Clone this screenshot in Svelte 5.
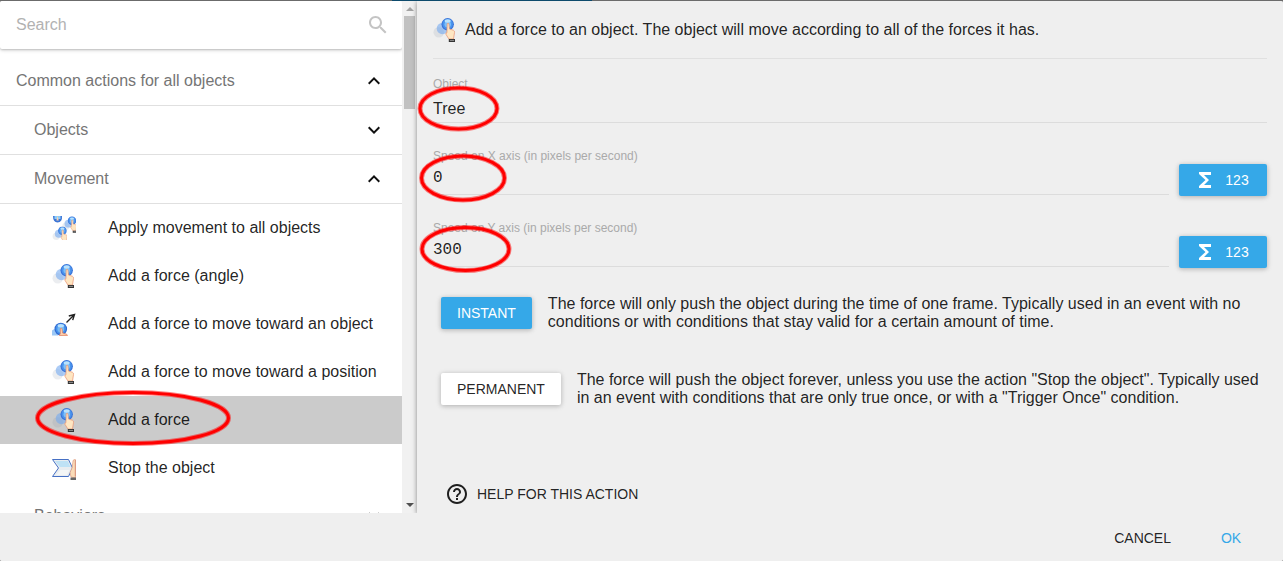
<script lang="ts">
	type IconName = 'force' | 'forces' | 'toward' | 'stop';

	interface Action {
		label: string;
		icon: IconName;
	}

	const actions: Action[] = [
		{ label: 'Apply movement to all objects', icon: 'forces' },
		{ label: 'Add a force (angle)', icon: 'force' },
		{ label: 'Add a force to move toward an object', icon: 'toward' },
		{ label: 'Add a force to move toward a position', icon: 'force' },
		{ label: 'Add a force', icon: 'force' },
		{ label: 'Stop the object', icon: 'stop' }
	];

	let selected = $state('Add a force');
	let search = $state('');
	let objectName = $state('Tree');
	let speeds = $state([
		{ id: 'speed-1', label: 'Speed on X axis (in pixels per second)', value: '0' },
		{ id: 'speed-2', label: 'Speed on Y axis (in pixels per second)', value: '300' }
	]);
	let mode = $state('instant');
</script>

{#snippet pointer()}
	<circle cx="5.8" cy="14.3" r="5.3" fill="#8a94a5" fill-opacity="0.17" />
	<circle cx="9.5" cy="10.5" r="5.8" fill="#74aaf0" fill-opacity="0.6" />
	<circle cx="14.7" cy="6.3" r="6.2" fill="#3a74d8" />
	<circle cx="14.7" cy="6" r="5.2" fill="#4a94ee" />
	<circle cx="14.7" cy="6.2" r="3.2" fill="#7cc0fa" />
	<ellipse cx="14.7" cy="3" rx="3" ry="1.7" fill="#b9e2fd" />
	<path
		d="M14.2 5.6q.9-.8 1.7 0l.6 5.4 4 1.3q1.3.6 1 2.3l-1 6.4h-4.6l-2.9-4.6q-.6-2 .9-1.6z"
		fill="#fee6c2"
		stroke="#e89070"
		stroke-width="0.7"
	/>
	<path d="M15.8 21H22v3h-6.2z" fill="#333" />
	<path d="M16.8 22.4h4.3" stroke="#aaa" stroke-width="0.8" />
{/snippet}

{#snippet actionIcon(name: IconName)}
	<svg class="action-icon" viewBox="0 0 24 24" aria-hidden="true">
		{#if name === 'force'}
			{@render pointer()}
		{:else if name === 'forces'}
			<path d="M1 0h9q.5 6-4.5 6.5Q1 6 1 0z" fill="#3c75d6" />
			<path d="M2.5 0h6v3h-6z" fill="#8ccbfa" />
			<path d="M5.5 0l1.3 4.5H4.4z" fill="#fbd3b0" />
			<g transform="translate(10 .5) scale(.68)">{@render pointer()}</g>
			<svg x="0" y="10.5" width="15" height="13.5" viewBox="0 0 21 19.6">{@render pointer()}</svg>
		{:else if name === 'toward'}
			<path d="M0 23.5v-5q3-3 7-1l-1 6z" fill="#9cc8f5" />
			<circle cx="8.8" cy="17" r="6.3" fill="#2f6ad2" />
			<circle cx="8.8" cy="16.7" r="5.2" fill="#4791ea" />
			<circle cx="8.8" cy="17" r="3.4" fill="#74bbf8" />
			<ellipse cx="8.8" cy="13.8" rx="3.2" ry="1.7" fill="#b9e2fd" />
			<path
				d="M8.3 16.6q.9-.8 1.7 0l.6 4.4 4.2 1.3.7 1.2H7.2l1.2-2z"
				fill="#fdd0ac"
				stroke="#e2805f"
				stroke-width="0.7"
			/>
			<path d="M14.5 10.5L22 3M16.8 4l5.7-1.5-1.8 5.6" fill="none" stroke="#222" stroke-width="1.4" />
		{:else}
			<path d="M.5 3.5h16l4 8.5-4 8.5H.5l6-8.5z" fill="#e9edf0" stroke="#4670c4" />
			<path d="M3 5h12.7l2.8 6H7.8z" fill="#bfe2f5" />
			<path d="M8.5 14h9l-2.5 5H4z" fill="#f4f6f6" />
			<path
				d="M22.5 3.5q-1.7 0-1.7 3l-.6 5-2.2 5 1 4.5 2 .5h3V4z"
				fill="#fadcb8"
				stroke="#dd9a80"
				stroke-width="0.7"
			/>
			<path d="M23.3 4v16.5" stroke="#d68d78" stroke-width="0.9" />
			<path d="M18.5 21.5H24V24h-5.5z" fill="#666" />
		{/if}
	</svg>
{/snippet}

{#snippet group(label: string, open: boolean, nested: boolean)}
	<button class="group" class:nested aria-expanded={open}>
		<span>{label}</span>
		<svg class="icon" viewBox="0 0 24 24" aria-hidden="true">
			{#if open}
				<path d="M12 8l-6 6 1.4 1.4L12 10.8l4.6 4.6L18 14z" />
			{:else}
				<path d="M16.6 8.6L12 13.2 7.4 8.6 6 10l6 6 6-6z" />
			{/if}
		</svg>
	</button>
{/snippet}

<div class="backdrop">
	<div class="backdrop-tabs"></div>
	<div class="dialog" role="dialog" aria-label="Edit action">
		<div class="body">
			<aside class="sidebar">
				<div class="selector">
					<div class="search">
						<input type="text" placeholder="Search" aria-label="Search" bind:value={search} />
						<svg class="icon" viewBox="0 0 24 24" aria-hidden="true">
							<path
								d="M15.5 14h-.79l-.28-.27C15.41 12.59 16 11.11 16 9.5 16 5.91 13.09 3 9.5 3S3 5.91 3 9.5 5.91 16 9.5 16c1.61 0 3.09-.59 4.23-1.57l.27.28v.79l5 4.99L20.49 19l-4.99-5zm-6 0C7.01 14 5 11.99 5 9.5S7.01 5 9.5 5 14 7.01 14 9.5 11.99 14 9.5 14z"
							/>
						</svg>
					</div>
					<div class="list">
						{@render group('Common actions for all objects', true, false)}
						{@render group('Objects', false, true)}
						{@render group('Movement', true, true)}
						{#each actions as action}
							<button
								class="action"
								class:selected={selected === action.label}
								onclick={() => (selected = action.label)}
							>
								{@render actionIcon(action.icon)}
								<span>{action.label}</span>
							</button>
						{/each}
						{@render group('Behaviors', false, true)}
					</div>
				</div>
				<div class="scrollbar" aria-hidden="true">
					<span class="arrow up"></span>
					<span class="thumb"></span>
					<span class="arrow down"></span>
				</div>
			</aside>

			<main class="editor">
				<header>
					{@render actionIcon('force')}
					<p>Add a force to an object. The object will move according to all of the forces it has.</p>
				</header>

				<div class="field">
					<div class="text-field">
						<label for="object">Object</label>
						<input id="object" type="text" bind:value={objectName} />
					</div>
				</div>

				{#each speeds as speed}
					<div class="field">
						<div class="text-field">
							<label for={speed.id}>{speed.label}</label>
							<input id={speed.id} class="expression" type="text" bind:value={speed.value} />
						</div>
						<button class="raised primary with-icon">
							<svg class="icon" viewBox="0 0 24 24" aria-hidden="true">
								<path d="M18 4H6v2l6.5 6L6 18v2h12v-3h-7l5-5-5-5h7z" />
							</svg>
							123
						</button>
					</div>
				{/each}

				<div class="mode">
					<button
						class="raised"
						class:primary={mode === 'instant'}
						onclick={() => (mode = 'instant')}>INSTANT</button
					>
					<p>
						The force will only push the object during the time of one frame. Typically used in an
						event with no conditions or with conditions that stay valid for a certain amount of time.
					</p>
				</div>
				<div class="mode">
					<button
						class="raised"
						class:primary={mode === 'permanent'}
						onclick={() => (mode = 'permanent')}>PERMANENT</button
					>
					<p>
						The force will push the object forever, unless you use the action "Stop the object".
						Typically used in an event with conditions that are only true once, or with a "Trigger
						Once" condition.
					</p>
				</div>

				<button class="flat help">
					<svg class="icon" viewBox="0 0 24 24" aria-hidden="true">
						<path
							d="M11 18h2v-2h-2v2zm1-16C6.48 2 2 6.48 2 12s4.48 10 10 10 10-4.48 10-10S17.52 2 12 2zm0 18c-4.41 0-8-3.59-8-8s3.59-8 8-8 8 3.59 8 8-3.59 8-8 8zm0-14c-2.21 0-4 1.79-4 4h2c0-1.1.9-2 2-2s2 .9 2 2c0 2-3 1.75-3 5h2c0-2.25 3-2.5 3-5 0-2.21-1.79-4-4-4z"
						/>
					</svg>
					HELP FOR THIS ACTION
				</button>
			</main>
		</div>

		<footer>
			<button class="flat">CANCEL</button>
			<button class="flat ok">OK</button>
		</footer>
	</div>

	<!-- Hand-drawn circles around the values to fill in -->
	<svg class="marks" aria-hidden="true">
		{#each [[458.5, 108.5, 38.5, 20.5], [463, 178, 41.5, 22], [465.5, 249, 43.5, 21.5], [133, 418, 95.5, 25.5]] as [cx, cy, rx, ry]}
			<ellipse class="halo" {cx} {cy} {rx} {ry} />
			<ellipse {cx} {cy} {rx} {ry} />
		{/each}
	</svg>
</div>

<style>
	:global(body) {
		margin: 0;
		font-family: 'Liberation Sans', Arial, sans-serif;
		font-size: 16px;
		color: rgba(0, 0, 0, 0.87);
	}

	.backdrop {
		position: relative;
		display: flex;
		flex-direction: column;
		height: 100vh;
		overflow: hidden;
		background: #6b6b6b;
	}

	.backdrop-tabs {
		flex: none;
		width: 200px;
		height: 1px;
		margin-left: 392px;
		background: #0d4a6c;
	}

	.dialog {
		display: flex;
		flex: 1;
		flex-direction: column;
		min-height: 0;
		overflow: hidden;
		border-radius: 2px;
		background: #efefef;
	}

	.body {
		display: flex;
		flex: 1;
		min-height: 0;
		overflow: hidden;
	}

	button {
		box-sizing: border-box;
		margin: 0;
		border: 0;
		color: inherit;
		font-family: inherit;
		text-align: left;
		cursor: pointer;
	}

	input {
		box-sizing: border-box;
		padding: 0;
		border: 0;
		outline: none;
		background: none;
		color: inherit;
		font: inherit;
	}

	p {
		margin: 0;
	}

	.icon,
	.action-icon {
		flex: none;
		width: 24px;
		height: 24px;
		fill: currentColor;
	}

	/* Left: list of actions */
	.sidebar {
		display: flex;
		flex: 0 0 417px;
		background: #fff;
	}

	.selector {
		display: flex;
		flex: 1;
		flex-direction: column;
		min-width: 0;
	}

	.search {
		display: flex;
		flex: none;
		align-items: center;
		height: 48px;
		padding: 0 12px 0 16px;
		border-radius: 2px;
		box-shadow:
			0 1px 4px rgba(0, 0, 0, 0.16),
			0 1px 2px rgba(0, 0, 0, 0.16);
	}

	.search input {
		flex: 1;
		height: 48px;
	}

	.search input::placeholder {
		color: #b2b2b2;
		opacity: 1;
	}

	.search .icon {
		color: #c4c4c4;
	}

	.list {
		flex: 1;
		min-height: 0;
		padding-top: 8px;
		overflow: hidden;
	}

	.group {
		display: flex;
		align-items: center;
		justify-content: space-between;
		width: 100%;
		height: 49px;
		padding: 0 16px;
		border-bottom: 1px solid #e0e0e0;
		background: #fff;
		color: #757575;
		font-size: 16px;
	}

	.group.nested {
		padding-left: 34px;
	}

	.group .icon {
		color: #111;
	}

	.action {
		display: flex;
		align-items: center;
		gap: 32px;
		width: 100%;
		height: 48px;
		padding: 0 16px 0 52px;
		background: #fff;
		font-size: 16px;
	}

	.action.selected {
		background: #cbcbcb;
	}

	.scrollbar {
		display: flex;
		flex: 0 0 15px;
		flex-direction: column;
		align-items: center;
		background: #f1f1f1;
	}

	.thumb {
		width: 11px;
		height: 93px;
		margin-top: 5px;
		background: #c1c1c1;
	}

	.arrow {
		border: 4px solid transparent;
	}

	.arrow.up {
		margin-top: 2px;
		border-bottom-color: #a3a3a3;
	}

	.arrow.down {
		margin-top: auto;
		margin-bottom: 2px;
		border-top-color: #505050;
	}

	/* Right: parameters of the selected action */
	.editor {
		z-index: 1;
		display: flex;
		flex: 1;
		flex-direction: column;
		min-width: 0;
		padding: 0 16px;
		background: #efefef;
		box-shadow:
			0 1px 6px rgba(0, 0, 0, 0.24),
			0 1px 4px rgba(0, 0, 0, 0.24);
	}

	header {
		display: flex;
		flex: none;
		align-items: center;
		gap: 8px;
		height: 57px;
		border-bottom: 1px solid #e0e0e0;
	}

	.field {
		display: flex;
		flex: none;
		gap: 10px;
		height: 72px;
	}

	.text-field {
		display: flex;
		flex: 1;
		flex-direction: column;
		height: 64px;
		box-sizing: border-box;
		padding-top: 18px;
		border-bottom: 1px solid #dcdcdc;
	}

	.text-field label {
		color: #aaa;
		font-size: 12px;
		line-height: 14px;
	}

	.text-field input {
		width: 100%;
		height: 31px;
		padding-top: 4px;
	}

	.text-field .expression {
		height: 30px;
		padding-top: 0;
		font-family: 'Liberation Mono', monospace;
	}

	.raised {
		flex: none;
		height: 32px;
		padding: 0 16px;
		border-radius: 2px;
		background: #fff;
		font-size: 14px;
		box-shadow:
			0 1px 6px rgba(0, 0, 0, 0.12),
			0 1px 4px rgba(0, 0, 0, 0.16);
	}

	.raised.primary {
		background: #35a8e8;
		color: #fff;
	}

	.with-icon {
		display: flex;
		align-items: center;
		justify-content: center;
		gap: 8px;
		min-width: 88px;
		margin-top: 33px;
		padding: 0 16px 0 12px;
	}

	.mode {
		display: flex;
		flex: none;
		align-items: center;
		gap: 16px;
		height: 76px;
		padding: 0 8px;
		line-height: 18px;
	}

	.flat {
		height: 36px;
		padding: 0 16px;
		background: none;
		font-size: 14px;
	}

	.help {
		display: flex;
		flex: none;
		align-items: center;
		align-self: flex-start;
		gap: 8px;
		margin-top: auto;
		margin-bottom: 1px;
		padding-left: 12px;
	}

	footer {
		z-index: 2;
		display: flex;
		flex: none;
		align-items: center;
		justify-content: flex-end;
		box-sizing: border-box;
		height: 48px;
		padding: 2px 8px 0;
		background: #efefef;
	}

	.ok {
		min-width: 88px;
		color: #35a8e8;
		text-align: center;
	}

	.marks {
		position: absolute;
		inset: 0;
		z-index: 3;
		width: 100%;
		height: 100%;
		fill: none;
		stroke: #f00;
		stroke-width: 3px;
		pointer-events: none;
	}

	.marks .halo {
		stroke-opacity: 0.5;
		stroke-width: 5px;
	}
</style>
